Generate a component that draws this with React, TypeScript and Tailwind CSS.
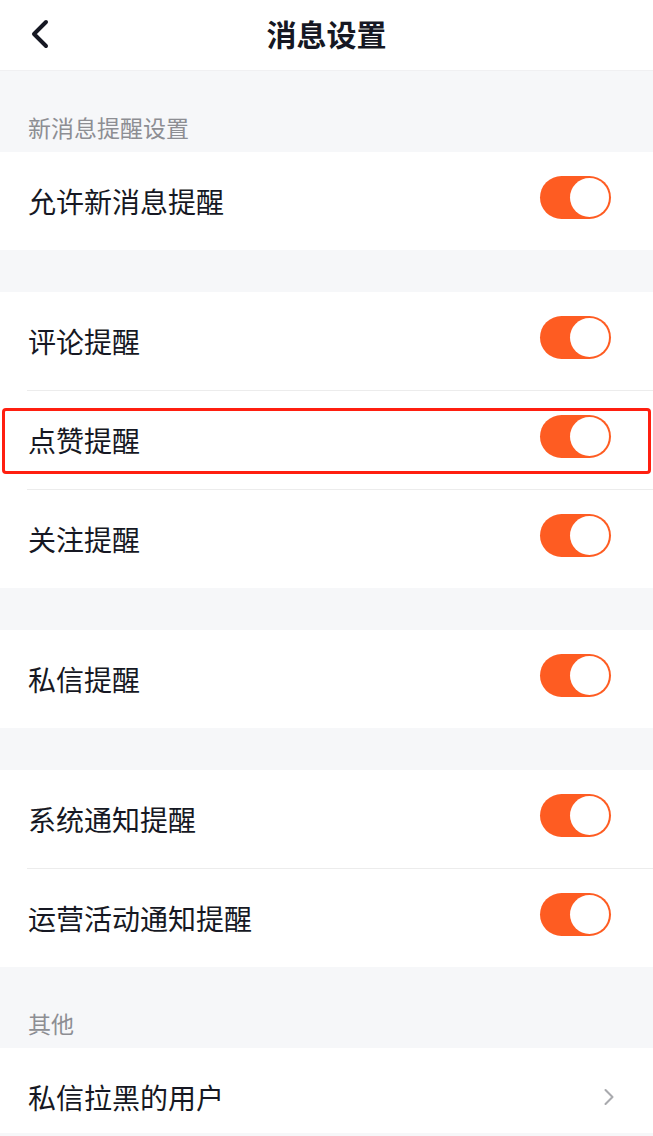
import { ChevronLeft, ChevronRight } from "lucide-react";

const font = { fontFamily: '"Noto Sans CJK SC", "Noto Sans", sans-serif' };

function Toggle() {
  return (
    <div className="w-[71px] h-[43px] mb-[8px] rounded-full bg-[#fe5c22] flex items-center justify-end p-[2px]">
      <div className="w-[39px] h-[39px] rounded-full bg-white" />
    </div>
  );
}

function Row({ label, divider, highlight }: { label: string; divider?: boolean; highlight?: boolean }) {
  return (
    <div className="relative bg-white">
      <div className="h-[98px] flex items-center justify-between pl-[28px] pr-[42px]">
        <span className="text-[28px] text-[#161823]">{label}</span>
        <Toggle />
      </div>
      {divider && <div className="ml-[27px] h-px bg-[#ececec]" />}
      {highlight && (
        <div className="absolute left-[2px] right-[2px] top-[17px] h-[66px] border-[3px] border-[#ff1f10] rounded-[4px]" />
      )}
    </div>
  );
}

function SectionLabel({ text }: { text: string }) {
  return (
    <div className="h-[81px] bg-[#f6f7f9] flex items-end pl-[28px] pb-[8px]">
      <span className="text-[23px] text-[#8d8e93]">{text}</span>
    </div>
  );
}

function Gap() {
  return <div className="h-[42px] bg-[#f6f7f9]" />;
}

export default function App() {
  return (
    <div className="w-[653px] h-[1136px] bg-[#f6f7f9] overflow-hidden" style={font}>
      {/* header */}
      <div className="relative h-[71px] bg-white flex items-center justify-center pb-[4px] border-b border-[#f0f0f2]">
        <ChevronLeft className="absolute left-[16px] top-[10px] w-[48px] h-[48px] text-[#161823]" strokeWidth={2} />
        <span className="text-[30px] font-bold text-[#161823]">消息设置</span>
      </div>

      <SectionLabel text="新消息提醒设置" />
      <Row label="允许新消息提醒" />

      <Gap />
      <Row label="评论提醒" divider />
      <Row label="点赞提醒" divider highlight />
      <Row label="关注提醒" />

      <Gap />
      <Row label="私信提醒" />

      <Gap />
      <Row label="系统通知提醒" divider />
      <Row label="运营活动通知提醒" />

      <SectionLabel text="其他" />
      <div className="h-[85px] bg-white flex items-center justify-between pl-[28px] pr-[30px] pt-[12px]">
        <span className="text-[28px] text-[#161823]">私信拉黑的用户</span>
        <ChevronRight className="w-[28px] h-[28px] text-[#a9aaae]" strokeWidth={1.8} />
      </div>
    </div>
  );
}
